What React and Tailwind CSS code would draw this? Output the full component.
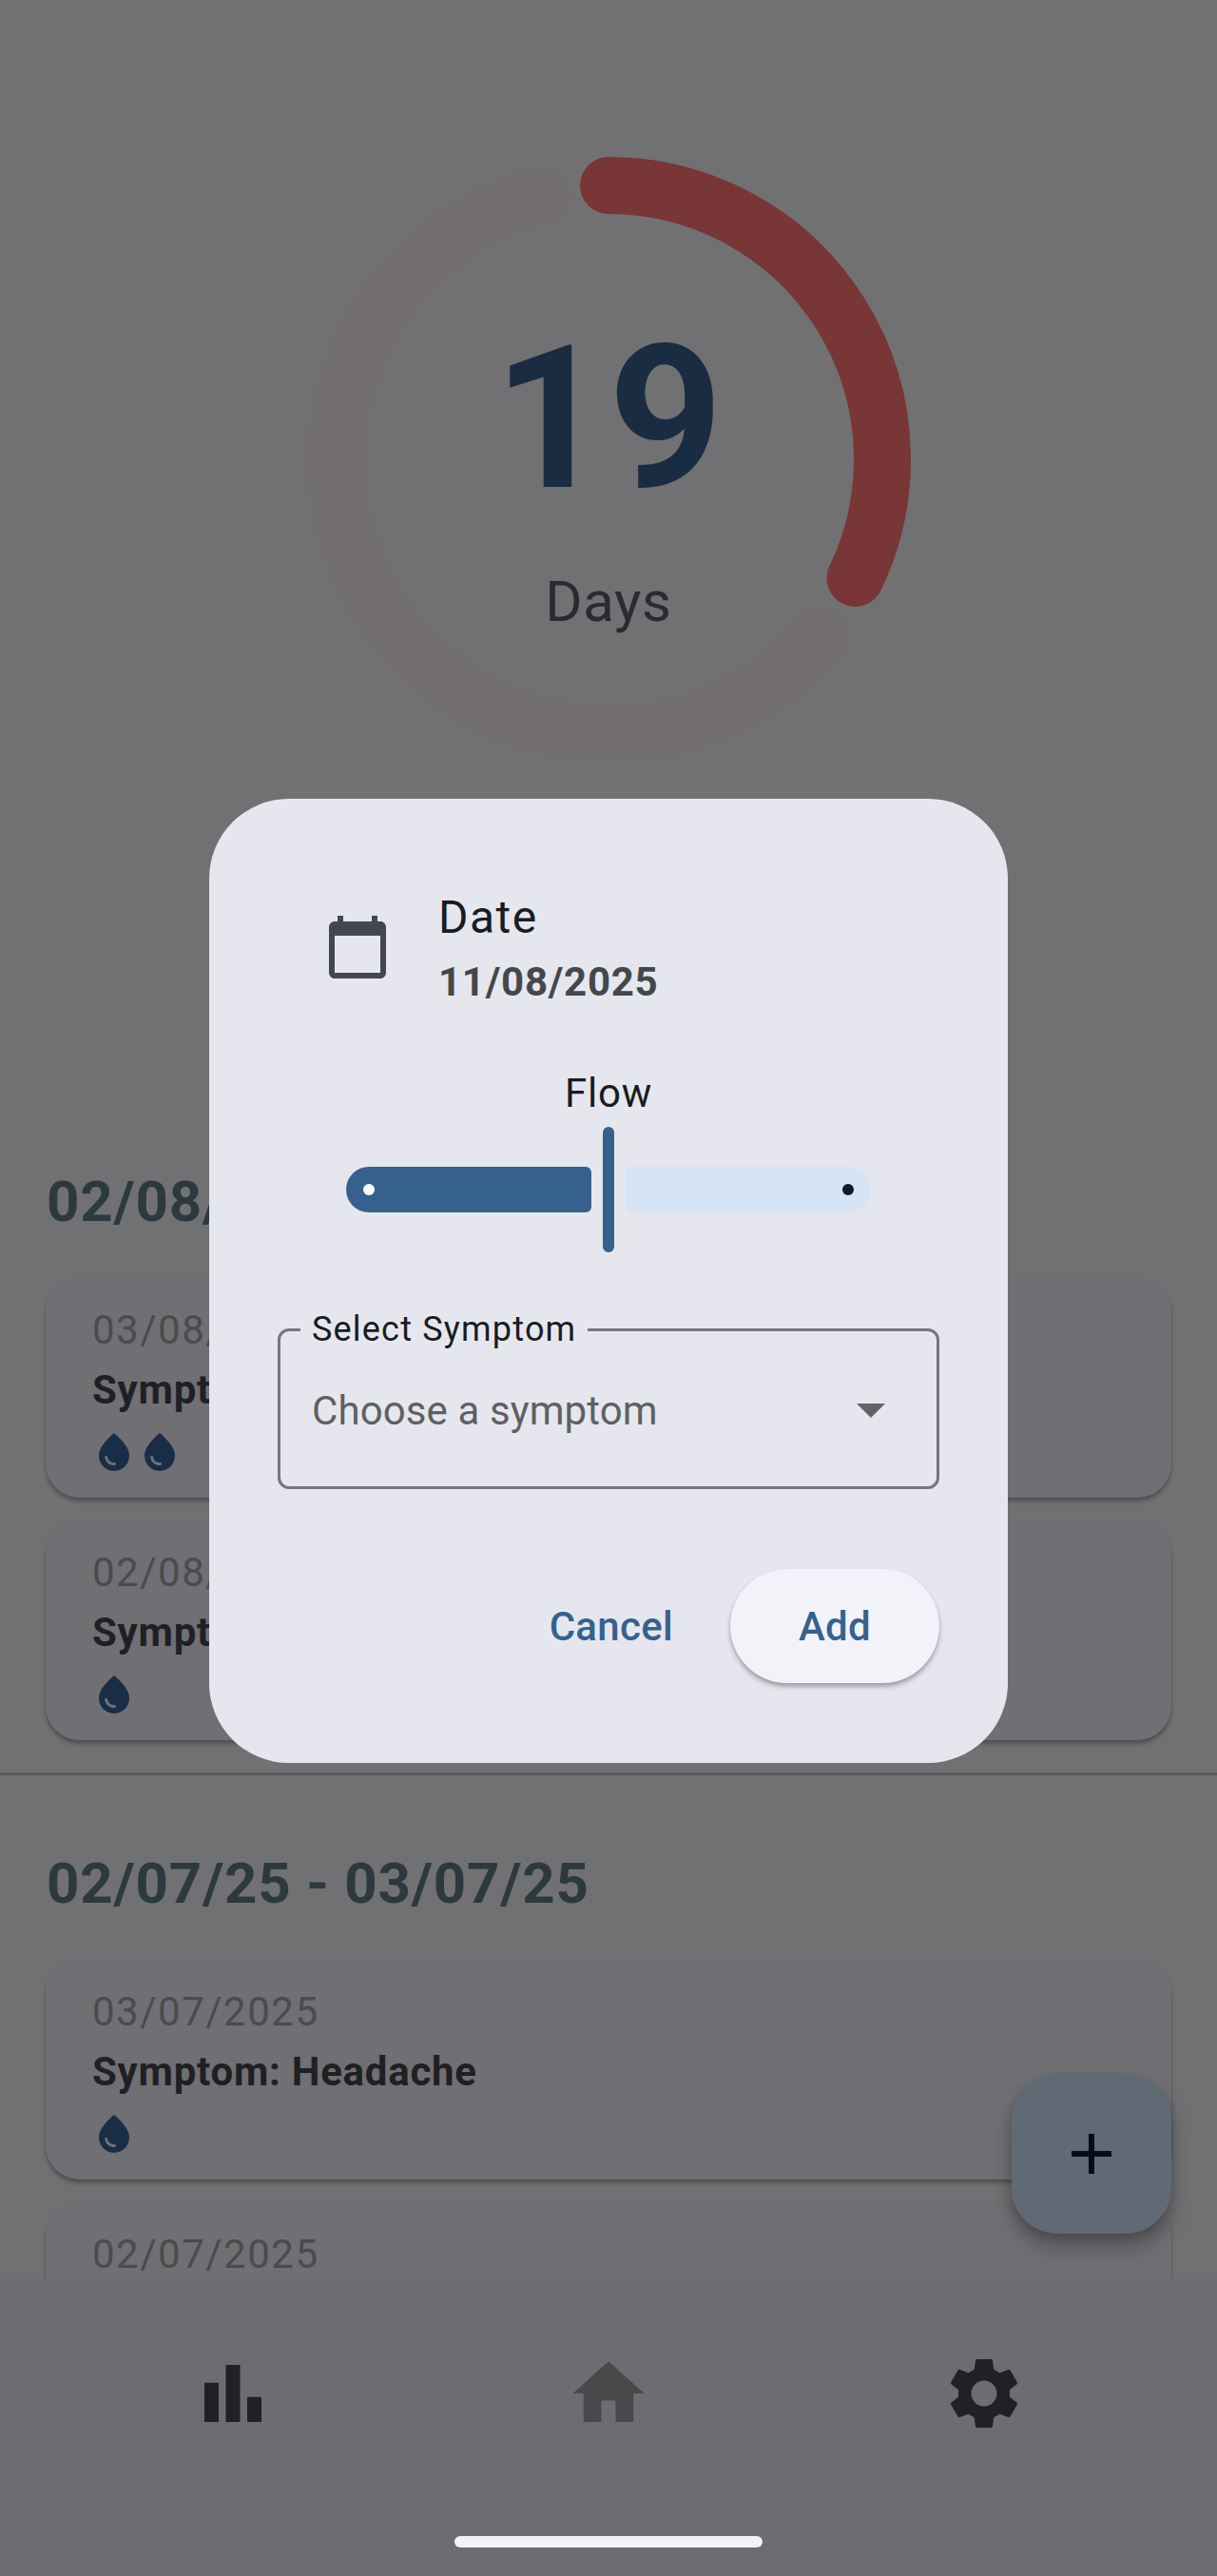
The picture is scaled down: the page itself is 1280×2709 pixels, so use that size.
import React from "react";

const DROP =
  "M12 2c-5.33 4.55-8 8.48-8 11.8 0 4.98 3.8 8.2 8 8.2s8-3.22 8-8.2c0-3.32-2.67-7.25-8-11.8zM7.83 14c.37 0 .67.26.74.62.41 2.22 2.28 2.98 3.64 2.87.43-.02.79.32.79.75 0 .4-.32.73-.72.75-2.13.13-4.62-1.09-5.19-4.12-.08-.45.28-.87.74-.87z";
const CALENDAR =
  "M20 3h-1V1h-2v2H7V1H5v2H4c-1.1 0-2 .9-2 2v16c0 1.1.9 2 2 2h16c1.1 0 2-.9 2-2V5c0-1.1-.9-2-2-2zm0 18H4V8h16v13z";
const BARS = "M4 9h4v11H4zM10 4h4v16h-4zM16 13h4v7h-4z";
const HOME = "M10 20v-6h4v6h5v-8h3L12 3 2 12h3v8z";
const GEAR =
  "M19.14 12.94c.04-.3.06-.61.06-.94 0-.32-.02-.64-.07-.94l2.03-1.58c.18-.14.23-.41.12-.61l-1.92-3.32c-.12-.22-.37-.29-.59-.22l-2.39.96c-.5-.38-1.03-.7-1.62-.94l-.36-2.54c-.04-.24-.24-.41-.48-.41h-3.84c-.24 0-.43.17-.47.41l-.36 2.54c-.59.24-1.13.57-1.62.94l-2.39-.96c-.22-.08-.47 0-.59.22L2.74 8.87c-.12.21-.08.47.12.61l2.03 1.58c-.05.3-.09.63-.09.94s.02.64.07.94l-2.03 1.58c-.18.14-.23.41-.12.61l1.92 3.32c.12.22.37.29.59.22l2.39-.96c.5.38 1.03.7 1.62.94l.36 2.54c.05.24.24.41.48.41h3.84c.24 0 .44-.17.47-.41l.36-2.54c.59-.24 1.13-.56 1.62-.94l2.39.96c.22.08.47 0 .59-.22l1.92-3.32c.12-.22.07-.47-.12-.61l-2.01-1.58zM12 15.6c-1.98 0-3.6-1.62-3.6-3.6s1.62-3.6 3.6-3.6 3.6 1.62 3.6 3.6-1.62 3.6-3.6 3.6z";

function Icon({ d, className }) {
  return (
    <svg viewBox="0 0 24 24" className={className} fill="currentColor" aria-hidden="true">
      <path d={d} />
    </svg>
  );
}

// Point on the cycle ring, with the angle in degrees clockwise from the top.
function ringPoint(deg) {
  const a = (deg * Math.PI) / 180;
  return `${318 + 288 * Math.sin(a)} ${318 - 288 * Math.cos(a)}`;
}

function CycleRing() {
  const sweep = (9 / 28) * 360;
  const gap = 14.3;
  return (
    <div className="mx-auto mt-[165px] grid h-[636px] w-[636px] shrink-0 grid-cols-1 grid-rows-1">
      <svg viewBox="0 0 636 636" className="col-start-1 row-start-1 h-full w-full" fill="none" strokeWidth="60" strokeLinecap="round">
        <path d={`M${ringPoint(sweep + gap)}A288 288 0 1 1 ${ringPoint(360 - gap)}`} stroke="#746f6f" transform="translate(2 1)" />
        <path d={`M${ringPoint(0)}A288 288 0 0 1 ${ringPoint(sweep)}`} stroke="#783637" />
      </svg>
      <div className="col-start-1 row-start-1 flex flex-col items-center pt-[175px]">
        <div className="text-[210px] leading-[200px] font-bold tracking-[0.6px] text-[#192c42]">19</div>
        <div className="mt-[51px] text-[60px] leading-[84px] tracking-[0.6px] text-[#282b2f]">Days</div>
      </div>
    </div>
  );
}

function EntryCard({ date, symptom, drops }) {
  return (
    <div className="h-[231px] shrink-0 rounded-[36px] bg-[#706f73] px-12 pt-[25px] shadow-[0_4px_4px_rgba(0,0,0,0.26),0_2px_3px_rgba(0,0,0,0.06)]">
      <div className="pl-px text-[42px] leading-[60px] tracking-[1.5px] text-[#4b4b4d]">{date}</div>
      <div className="mt-[3px] pl-px text-[42px] leading-[60px] font-bold tracking-[0.75px] text-[#1f2024]">{symptom}</div>
      <div className="mt-[11px] flex">
        {Array.from({ length: drops }, (_, i) => (
          <Icon key={i} d={DROP} className="size-12 text-[#192e46]" />
        ))}
      </div>
    </div>
  );
}

function Period({ title, children }) {
  return (
    <section className="shrink-0 px-12">
      <h2 className="mb-[38px] pl-px text-[60px] leading-[84px] font-bold tracking-[0.8px] text-[#2c393e]">{title}</h2>
      <div className="flex flex-col gap-6">{children}</div>
    </section>
  );
}

function NavBar() {
  return (
    <nav className="flex h-[312px] shrink-0 flex-col items-center bg-[#6c6d70] pt-[75px]">
      <div className="flex w-full justify-between px-[200px]">
        <Icon d={BARS} className="size-[90px] text-[#1f2125]" />
        <Icon d={HOME} className="size-[90px] text-[#48494b]" />
        <Icon d={GEAR} className="size-[90px] text-[#1f2125]" />
      </div>
      <div className="mt-[105px] h-3 w-[324px] rounded-full bg-[#f2f3f5]" />
    </nav>
  );
}

function FlowSlider() {
  return (
    <div className="mx-auto mt-[5px] flex h-[132px] w-[552px] items-center justify-between">
      <div className="flex h-12 w-[258px] items-center rounded-l-[24px] rounded-r-[6px] bg-[#36618e] pl-[18px]">
        <div className="size-3 rounded-full bg-white" />
      </div>
      <div className="h-full w-3 rounded-full bg-[#36618e]" />
      <div className="flex h-12 w-[258px] items-center justify-end rounded-l-[6px] rounded-r-[24px] bg-[#d6e4f6] pr-[18px]">
        <div className="size-3 rounded-full bg-[#0e1a2a]" />
      </div>
    </div>
  );
}

function AddEntryDialog() {
  return (
    <div className="absolute top-[840px] left-[220px] flex h-[1014px] w-[840px] flex-col rounded-[84px] bg-[#e6e7ee] px-[72px]">
      <div className="mt-[90px] flex h-[132px] shrink-0 items-center gap-12 pl-12">
        <Icon d={CALENDAR} className="size-[72px] text-[#44474e]" />
        <div className="pl-px">
          <div className="text-[48px] leading-[69px] tracking-[1.5px] text-[#191c20]">Date</div>
          <div className="mt-1 text-[42px] leading-[60px] font-bold tracking-[0.75px] text-[#44474b]">11/08/2025</div>
        </div>
      </div>
      <div className="mt-[58px] text-center text-[42px] leading-[60px] tracking-[0.75px] text-[#191c20]">Flow</div>
      <FlowSlider />
      <fieldset className="mt-[60px] h-[189px] rounded-xl border-3 border-[#74777c] pl-[21px]">
        <legend className="px-3 text-[36px] leading-[42px] tracking-[1.2px] text-[#191c20]">Select Symptom</legend>
        <div className="flex h-[129px] items-center justify-between pr-[54px] pl-3">
          <span className="text-[42px] tracking-[0.1px] text-[#5f6062]">Choose a symptom</span>
          <svg viewBox="0 0 30 15" className="h-[15px] w-[30px]" fill="#626365">
            <path d="M0 0h30L15 15z" />
          </svg>
        </div>
      </fieldset>
      <div className="mt-[84px] flex h-[120px] justify-end text-[42px] font-medium text-[#36618e]">
        <button className="px-[60px] tracking-[0.3px]">Cancel</button>
        <button className="w-[220px] rounded-full bg-[#f1f3f9] tracking-[0.3px] shadow-[0_4px_5px_rgba(0,0,0,0.28),0_1px_3px_rgba(0,0,0,0.08)]">Add</button>
      </div>
    </div>
  );
}

export default function App() {
  return (
    <div className="relative flex h-[2709px] w-[1280px] flex-col overflow-hidden bg-[#717173] font-[Roboto,sans-serif]">
      <main className="flex h-[2397px] shrink-0 flex-col overflow-hidden">
        <CycleRing />
        <div className="mt-[421px]">
          <Period title="02/08/25 - 03/08/25">
            <EntryCard date="03/08/2025" symptom="Symptom: Cramps" drops={2} />
            <EntryCard date="02/08/2025" symptom="Symptom: Headache" drops={1} />
          </Period>
        </div>
        <hr className="mt-[34px] mb-[72px] h-[3px] shrink-0 border-0 bg-[#5c5c5f]" />
        <Period title="02/07/25 - 03/07/25">
          <EntryCard date="03/07/2025" symptom="Symptom: Headache" drops={1} />
          <EntryCard date="02/07/2025" symptom="Symptom: Cramps" drops={1} />
        </Period>
      </main>
      <NavBar />
      <button className="absolute top-[2181px] left-[1064px] grid size-[168px] place-items-center rounded-[48px] bg-[#5f6a75] shadow-[0_14px_22px_rgba(0,0,0,0.28),0_4px_8px_rgba(0,0,0,0.12)]">
        <Icon d="M19 13h-6v6h-2v-6H5v-2h6V5h2v6h6v2z" className="size-[72px] text-[#020d18]" />
      </button>
      <AddEntryDialog />
    </div>
  );
}
